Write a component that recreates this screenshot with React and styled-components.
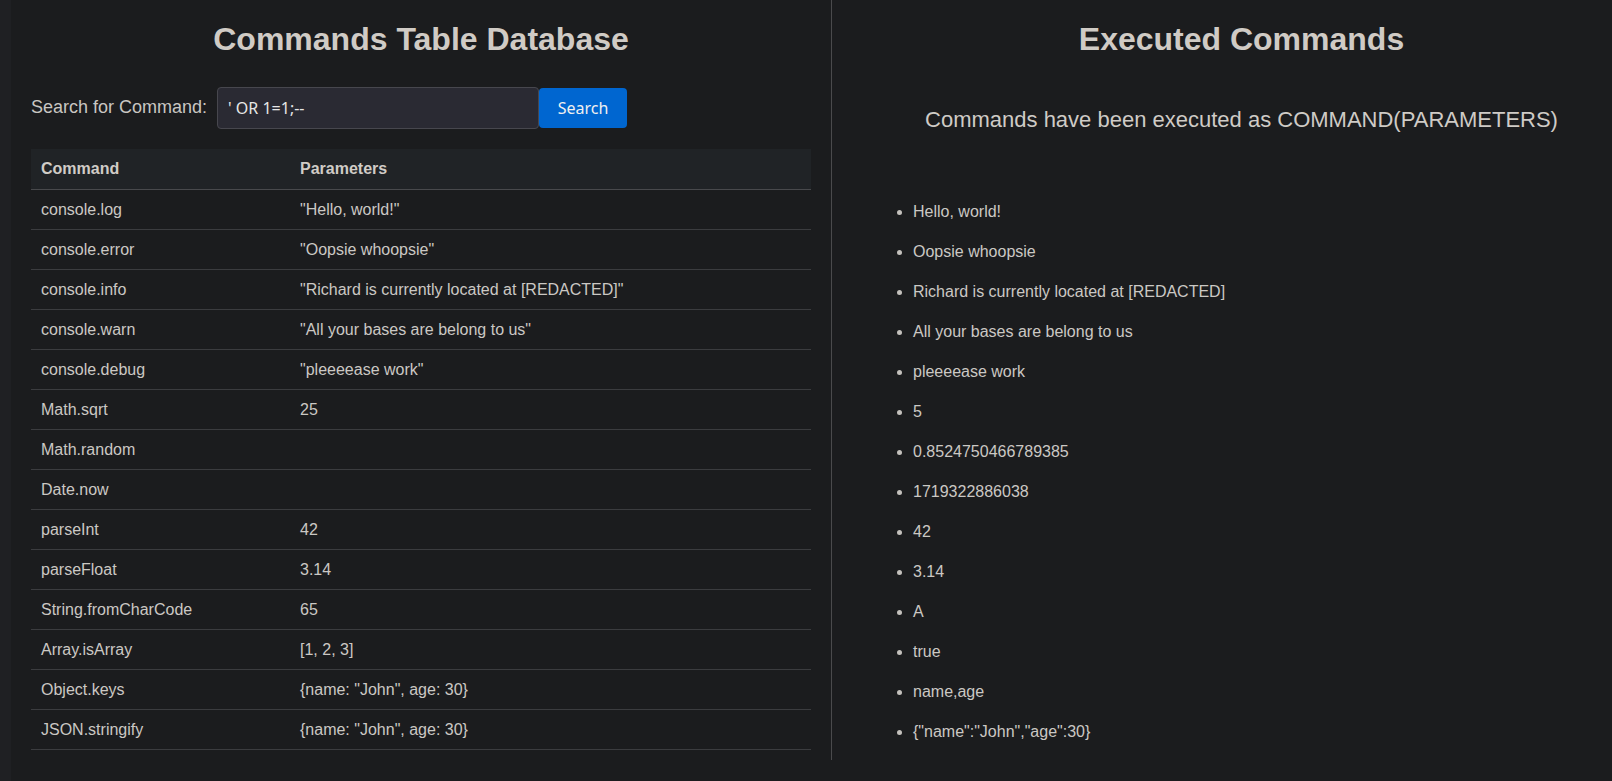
import React from "react";
import styled, { createGlobalStyle } from "styled-components";

const GlobalStyle = createGlobalStyle`
    html, body {
        margin: 0;
        padding: 0;
        background: #1f2023;
        overflow: hidden;
    }
    * {
        box-sizing: border-box;
    }
`;

const Page = styled.div`
    margin-left: 11px;
    min-height: 100vh;
    background: #1b1c1e;
    font-family: "Liberation Sans", Arial, sans-serif;
    color: #cfcbc6;
`;

const Columns = styled.div`
    display: flex;
    align-items: stretch;
    width: 1641px;
`;

const Panel = styled.section`
    width: 820px;
    flex: none;
    padding: 21px 20px 8px;
    border-left: ${(p) => (p.$divided ? "1px solid #4a4a4c" : "none")};
`;

const Title = styled.h1`
    margin: 0;
    font-size: 32px;
    line-height: 37px;
    font-weight: bold;
    text-align: center;
    color: #d0cbc5;
`;

const SearchRow = styled.form`
    display: flex;
    align-items: center;
    margin-top: 28px;
    height: 43px;
`;

const Label = styled.label`
    font-size: 18px;
    color: #c9c6c2;
    margin-right: 10px;
`;

const Input = styled.input`
    width: 322px;
    height: 42px;
    padding: 0 10px;
    background: #2a2a33;
    border: 1px solid #47474e;
    border-radius: 4px;
    color: #e6e6e6;
    font-family: "Noto Sans", sans-serif;
    font-size: 16px;
    outline: none;
`;

const Button = styled.button`
    width: 88px;
    height: 40px;
    border: none;
    border-radius: 4px;
    background: #0066d0;
    color: #f0f0f0;
    font-family: "Noto Sans", sans-serif;
    font-size: 16px;
    cursor: pointer;
`;

const Table = styled.table`
    width: 100%;
    margin-top: 20px;
    border-collapse: collapse;
    font-size: 16px;
`;

const HeadCell = styled.th`
    height: 40px;
    padding: 1px 10px 0;
    text-align: left;
    font-weight: bold;
    color: #d0ccc6;
    background: #202326;
    border-bottom: 1px solid #48494c;
    width: ${(p) => p.$width || "auto"};
`;

const Cell = styled.td`
    height: 40px;
    padding: 1px 10px 0;
    color: #cbc8c4;
    border-bottom: 1px solid #3b3c3f;
`;

const Subtitle = styled.p`
    margin: 49px 0 0;
    font-size: 22px;
    line-height: 26px;
    text-align: center;
    color: #cfcbc6;
`;

const List = styled.ul`
    margin: 59px 0 0;
    padding-left: 61px;
`;

const Item = styled.li`
    font-size: 16px;
    line-height: 20px;
    padding: 10px 0;
    color: #cbc8c4;
    &::marker {
        color: #c4c1bd;
    }
`;

const commands = [
    ["console.log", '"Hello, world!"'],
    ["console.error", '"Oopsie whoopsie"'],
    ["console.info", '"Richard is currently located at [REDACTED]"'],
    ["console.warn", '"All your bases are belong to us"'],
    ["console.debug", '"pleeeease work"'],
    ["Math.sqrt", "25"],
    ["Math.random", ""],
    ["Date.now", ""],
    ["parseInt", "42"],
    ["parseFloat", "3.14"],
    ["String.fromCharCode", "65"],
    ["Array.isArray", "[1, 2, 3]"],
    ["Object.keys", '{name: "John", age: 30}'],
    ["JSON.stringify", '{name: "John", age: 30}'],
];

const results = [
    "Hello, world!",
    "Oopsie whoopsie",
    "Richard is currently located at [REDACTED]",
    "All your bases are belong to us",
    "pleeeease work",
    "5",
    "0.8524750466789385",
    "1719322886038",
    "42",
    "3.14",
    "A",
    "true",
    "name,age",
    '{"name":"John","age":30}',
];

function App() {
    return (
        <>
            <GlobalStyle />
            <Page>
                <Columns>
                    <Panel>
                        <Title>Commands Table Database</Title>
                        <SearchRow onSubmit={(e) => e.preventDefault()}>
                            <Label htmlFor="cmd">Search for Command:</Label>
                            <Input id="cmd" defaultValue="' OR 1=1;--" />
                            <Button type="submit">Search</Button>
                        </SearchRow>
                        <Table>
                            <thead>
                                <tr>
                                    <HeadCell $width="259px">Command</HeadCell>
                                    <HeadCell>Parameters</HeadCell>
                                </tr>
                            </thead>
                            <tbody>
                                {commands.map(([name, params]) => (
                                    <tr key={name}>
                                        <Cell>{name}</Cell>
                                        <Cell>{params}</Cell>
                                    </tr>
                                ))}
                            </tbody>
                        </Table>
                    </Panel>
                    <Panel $divided>
                        <Title>Executed Commands</Title>
                        <Subtitle>Commands have been executed as COMMAND(PARAMETERS)</Subtitle>
                        <List>
                            {results.map((r, i) => (
                                <Item key={i}>{r}</Item>
                            ))}
                        </List>
                    </Panel>
                </Columns>
            </Page>
        </>
    );
}

export default App;
